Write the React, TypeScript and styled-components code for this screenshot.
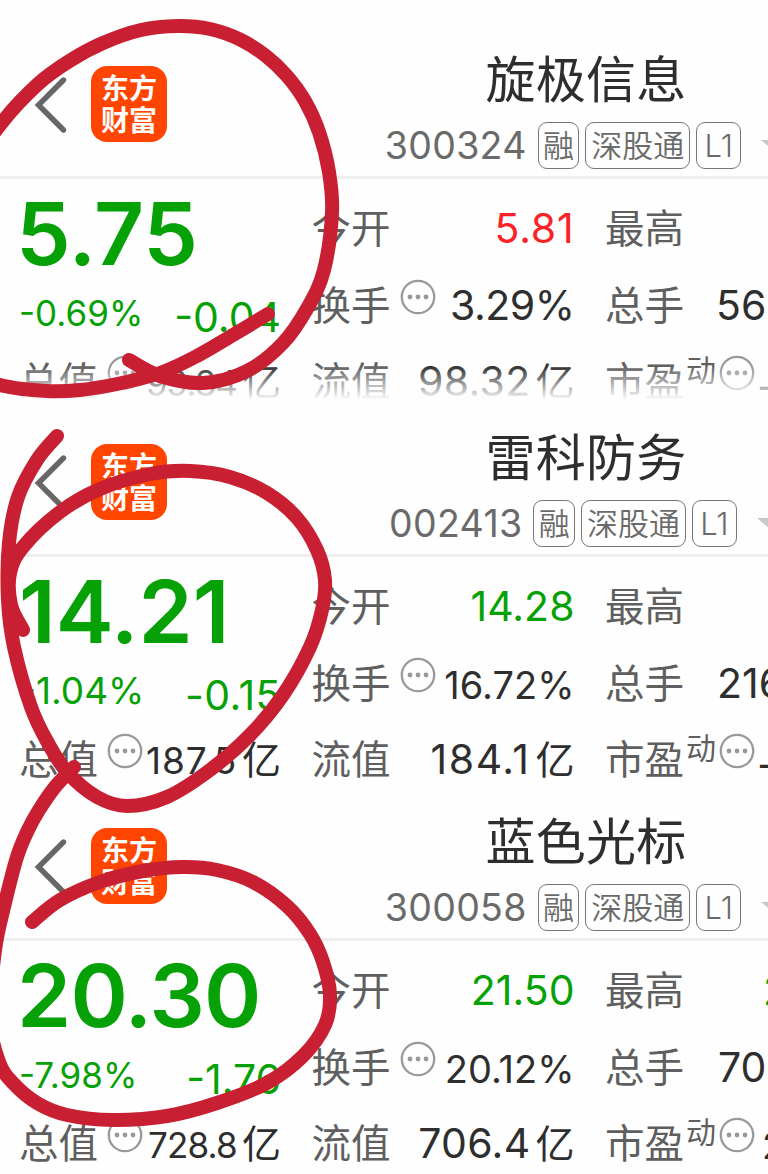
import React from "react";
import styled, { createGlobalStyle } from "styled-components";

type Tone = "up" | "down" | "plain";

interface Figure {
  text: string;
  size?: number;
  spacing?: number;
  drop?: number;
  indent?: number;
  unit?: string;
  tone?: Tone;
}

interface Stock {
  name: string;
  code: string;
  top: number;
  height: number;
  faded?: boolean;
  price: Figure;
  percent: Figure;
  change: Figure;
  total: Figure;
  open: Figure;
  turnover: Figure;
  flow: Figure;
  high?: Figure;
  volume: Figure;
  pe: Figure;
}

const tones = { up: "#fa2226", down: "#06a106", plain: "#2e2e2e" };

const stocks: Stock[] = [
  {
    name: "旋极信息",
    code: "300324",
    top: 179,
    height: 400,
    faded: true,
    price: { text: "5.75", spacing: -0.2, indent: -3 },
    percent: { text: "-0.69%", size: 35 },
    change: { text: "-0.04", size: 41 },
    total: { text: "99.84", size: 35, spacing: -1, unit: "亿" },
    open: { text: "5.81", spacing: 0.8, tone: "up" },
    turnover: { text: "3.29%", spacing: -0.5 },
    flow: { text: "98.32", spacing: 0.3, unit: "亿" },
    volume: { text: "56", indent: 32 },
    pe: { text: "-", indent: 2, drop: 5 },
  },
  {
    name: "雷科防务",
    code: "002413",
    top: 157,
    height: 383,
    price: { text: "14.21", indent: 0 },
    percent: { text: "-1.04%", size: 37 },
    change: { text: "-0.15", size: 41, spacing: 0.5 },
    total: { text: "187.5", size: 37, spacing: 0.8, unit: "亿" },
    open: { text: "14.28", tone: "down" },
    turnover: { text: "16.72%", size: 38, drop: 1 },
    flow: { text: "184.1", spacing: 1.6, unit: "亿" },
    volume: { text: "216", indent: 33 },
    pe: { text: "-", indent: 2, drop: 5 },
  },
  {
    name: "蓝色光标",
    code: "300058",
    top: 158,
    height: 391,
    price: { text: "20.30", spacing: -0.8, indent: -2 },
    percent: { text: "-7.98%", size: 35 },
    change: { text: "-1.76", size: 41 },
    total: { text: "728.8", size: 35, spacing: -0.8, unit: "亿" },
    open: { text: "21.50", tone: "down" },
    turnover: { text: "20.12%", size: 38, drop: 1 },
    flow: { text: "706.4", spacing: 0.3, unit: "亿" },
    high: { text: "21.50", tone: "down", indent: 79 },
    volume: { text: "70", indent: 34 },
    pe: { text: "29", size: 37, indent: 7, drop: 1 },
  },
];

type Point = [number, number];

const marks: Point[][] = [
  [
    [268, 314], [233, 335], [197, 356], [160, 373], [117, 384], [80, 390], [47, 391], [0, 385],
    [-35, 370], [-70, 300], [-50, 200], [0, 125], [38, 84], [71, 60], [103, 43], [141, 30],
    [178, 26], [210, 29], [240, 39.5], [266, 56], [287, 76], [305, 101], [319, 132], [329, 172],
    [332, 213], [324, 270], [308, 307], [283, 343], [247, 371], [203, 383], [160, 376], [129, 360],
  ],
  [
    [57, 436], [37, 460], [18, 497], [9, 543], [8, 600], [14, 647], [31, 707], [48, 743],
    [67, 772], [97, 797], [127, 806], [167, 797], [210, 770], [250, 735], [283, 695], [310, 647],
    [322, 610], [325, 580], [317, 550], [297, 518], [267, 493], [230, 477], [190, 471], [150, 474],
    [100, 489], [60, 512], [23, 547], [10, 573], [11, 605], [23, 630],
  ],
  [
    [74, 767], [55, 787], [39, 810], [28, 830], [17, 857], [5, 903], [-5, 950], [-10, 1020],
    [-1, 1062], [13, 1083], [37, 1103], [67, 1115], [113, 1120], [167, 1116], [217, 1103],
    [267, 1083], [303, 1056], [325, 1025], [330, 995], [323, 962], [310, 934], [287, 906],
    [253, 882], [217, 870], [183, 867], [143, 871], [100, 882], [60, 900], [32, 922],
  ],
];

// smooth curve through all the points of a pen mark
const toPath = (points: Point[]) => {
  let d = `M${points[0][0]} ${points[0][1]}`;
  for (let i = 0; i < points.length - 1; i++) {
    const before = points[i - 1] || points[i];
    const from = points[i];
    const to = points[i + 1];
    const after = points[i + 2] || to;
    d += ` C${from[0] + (to[0] - before[0]) / 6} ${from[1] + (to[1] - before[1]) / 6}`;
    d += ` ${to[0] - (after[0] - from[0]) / 6} ${to[1] - (after[1] - from[1]) / 6}`;
    d += ` ${to[0]} ${to[1]}`;
  }
  return d;
};

const Value = ({ figure }: { figure: Figure }) => (
  <Amount
    $size={figure.size || 41}
    $spacing={figure.spacing || 0}
    $drop={figure.drop || 0}
    $indent={figure.indent}
    $tone={figure.tone || "plain"}
  >
    {figure.text}
    {figure.unit && <Unit>{figure.unit}</Unit>}
  </Amount>
);

const More = () => (
  <MoreIcon viewBox="0 0 36 36">
    <circle cx="18" cy="18" r="16.2" fill="none" stroke="#999" strokeWidth="2.3" />
    <circle cx="10" cy="18" r="2.4" fill="#999" />
    <circle cx="18" cy="18" r="2.4" fill="#999" />
    <circle cx="26" cy="18" r="2.4" fill="#999" />
  </MoreIcon>
);

const StockPanel = ({ stock }: { stock: Stock }) => (
  <Panel $height={stock.height}>
    <Header $height={stock.top}>
      <Nav>
        <BackIcon viewBox="0 0 34 58">
          <path d="M29.5 4 L4.5 29 L29.5 54" fill="none" stroke="#666" strokeWidth="5.4" strokeLinecap="round" />
        </BackIcon>
        <Logo>
          <span>东方</span>
          <span>财富</span>
        </Logo>
      </Nav>
      <Heading>
        <Name>{stock.name}</Name>
        <CodeRow>
          <Code>{stock.code}</Code>
          <Badge $width={41.5}>融</Badge>
          <Badge $width={105}>深股通</Badge>
          <Badge $width={45}>L1</Badge>
          <Caret />
        </CodeRow>
      </Heading>
    </Header>
    <Body>
      <Column>
        <Price $spacing={stock.price.spacing || 0} $indent={stock.price.indent || 0}>
          {stock.price.text}
        </Price>
        <Changes>
          <Percent $size={stock.percent.size || 35}>{stock.percent.text}</Percent>
          <Change $spacing={stock.change.spacing || 0}>{stock.change.text}</Change>
        </Changes>
        <Row>
          <Label>总值</Label>
          <More />
          <Value figure={stock.total} />
        </Row>
      </Column>
      <Column>
        <Row>
          <Label>今开</Label>
          <Value figure={stock.open} />
        </Row>
        <Row>
          <Label>换手</Label>
          <More />
          <Value figure={stock.turnover} />
        </Row>
        <Row>
          <Label>流值</Label>
          <Value figure={stock.flow} />
        </Row>
      </Column>
      <Column>
        <Row>
          <Label>最高</Label>
          {stock.high && <Value figure={stock.high} />}
        </Row>
        <Row>
          <Label>总手</Label>
          <Value figure={stock.volume} />
        </Row>
        <Row>
          <Label>市盈</Label>
          <Sup>动</Sup>
          <More />
          <Value figure={stock.pe} />
        </Row>
      </Column>
    </Body>
    {stock.faded && <Fade />}
  </Panel>
);

const App = () => {
  return (
    <Screen>
      <GlobalStyle />
      {stocks.map((stock) => (
        <StockPanel key={stock.code} stock={stock} />
      ))}
      <Marks viewBox="0 0 768 1174">
        {marks.map((points, index) => (
          <path key={index} d={toPath(points)} />
        ))}
      </Marks>
    </Screen>
  );
};

export default App;

const GlobalStyle = createGlobalStyle`
  * {
    box-sizing: border-box;
  }
  body {
    margin: 0;
    background-color: #fefefe;
    font-family: Inter, "Noto Sans CJK SC", sans-serif;
  }
`;

const Screen = styled.div`
  position: relative;
  width: 768px;
  height: 1174px;
  overflow: hidden;
`;

const Panel = styled.section<{ $height: number }>`
  position: relative;
  height: ${({ $height }) => $height}px;
  overflow: hidden;
`;

const Header = styled.header<{ $height: number }>`
  display: grid;
  grid-template-columns: 384px 404px;
  align-items: end;
  width: 788px;
  height: ${({ $height }) => $height}px;
  border-bottom: 3px solid #eeeeee;
`;

const Nav = styled.div`
  display: flex;
  align-items: center;
  gap: 21px;
  padding: 0 0 34px 34px;
`;

const BackIcon = styled.svg`
  width: 34px;
  height: 58px;
  margin-top: 2px;
`;

const Logo = styled.div`
  display: flex;
  flex-direction: column;
  align-items: center;
  justify-content: center;
  width: 76px;
  height: 76px;
  margin-left: 2px;
  padding-top: 2px;
  border-radius: 16px;
  background-color: #ff4500;
  color: white;
  font-size: 28px;
  font-weight: 700;
  line-height: 32px;
`;

const Heading = styled.div`
  display: flex;
  flex-direction: column;
  align-items: center;
  padding-bottom: 7px;
`;

const Name = styled.h1`
  margin: 0;
  color: #2e2e2e;
  font-size: 50px;
  font-weight: 400;
  line-height: 60px;
  letter-spacing: 0.3px;
`;

const CodeRow = styled.div`
  display: flex;
  align-items: center;
  gap: 6px;
  margin-top: 12px;
`;

const Code = styled.span`
  margin-right: 5px;
  color: #6a6a6a;
  font-size: 37.5px;
  line-height: 46px;
  letter-spacing: 0.3px;
`;

const Badge = styled.span<{ $width: number }>`
  display: flex;
  align-items: center;
  justify-content: center;
  width: ${({ $width }) => $width}px;
  height: 47px;
  border: 1.5px solid #777;
  border-radius: 9px;
  color: #6a6a6a;
  font-size: 31px;
  font-weight: 350;
  line-height: 44px;
`;

const Caret = styled.i`
  margin-left: 14px;
  border: 13px solid transparent;
  border-top: 11px solid #c8c8c8;
  border-bottom: 0;
`;

const Body = styled.div`
  display: grid;
  grid-template-columns: 262px 263px 300px;
  column-gap: 30.5px;
  width: 900px;
  padding: 12px 0 0 19px;
`;

const Column = styled.div`
  display: flex;
  flex-direction: column;
`;

const Row = styled.div`
  display: flex;
  align-items: baseline;
  height: 76.7px;
`;

const Label = styled.span`
  color: #5f5f5f;
  font-size: 39.5px;
  line-height: 77px;
  white-space: nowrap;
`;

const Amount = styled.span<{
  $size: number;
  $spacing: number;
  $drop: number;
  $indent?: number;
  $tone: Tone;
}>`
  margin-left: ${({ $indent }) => ($indent === undefined ? "auto" : `${$indent}px`)};
  transform: translateY(${({ $drop }) => $drop}px);
  color: ${({ $tone }) => tones[$tone]};
  font-size: ${({ $size }) => $size}px;
  line-height: 1;
  letter-spacing: ${({ $spacing }) => $spacing}px;
  white-space: nowrap;
`;

const Unit = styled.span`
  margin-left: 5px;
  font-size: 39px;
  letter-spacing: 0;
`;

const Sup = styled.sup`
  align-self: flex-start;
  margin: 8px 0 0 2px;
  color: #5f5f5f;
  font-size: 30px;
  line-height: 36px;
  vertical-align: baseline;
`;

const MoreIcon = styled.svg`
  flex: none;
  align-self: flex-start;
  width: 36px;
  height: 36px;
  margin: 11px 0 0 9px;

  ${Sup} + & {
    margin-left: 3px;
  }
`;

const Price = styled.div<{ $spacing: number; $indent: number }>`
  height: 98px;
  margin-left: ${({ $indent }) => $indent}px;
  color: ${tones.down};
  font-size: 87px;
  font-weight: 600;
  line-height: 86px;
  letter-spacing: ${({ $spacing }) => $spacing}px;
`;

const Changes = styled.div`
  display: flex;
  justify-content: space-between;
  height: 55.4px;
  color: ${tones.down};
  white-space: nowrap;
`;

const Percent = styled.span<{ $size: number }>`
  font-size: ${({ $size }) => $size}px;
  line-height: 48px;
`;

const Change = styled.span<{ $spacing: number }>`
  font-size: 41px;
  line-height: 56px;
  letter-spacing: ${({ $spacing }) => $spacing}px;
`;

const Fade = styled.div`
  position: absolute;
  right: 0;
  bottom: 0;
  left: 0;
  height: 34px;
  background: linear-gradient(rgba(254, 254, 254, 0), #fefefe);
`;

const Marks = styled.svg`
  position: absolute;
  inset: 0;
  width: 768px;
  height: 1174px;
  pointer-events: none;

  path {
    fill: none;
    stroke: #c81f32;
    stroke-width: 14px;
    stroke-linecap: round;
    stroke-linejoin: round;
  }
`;
